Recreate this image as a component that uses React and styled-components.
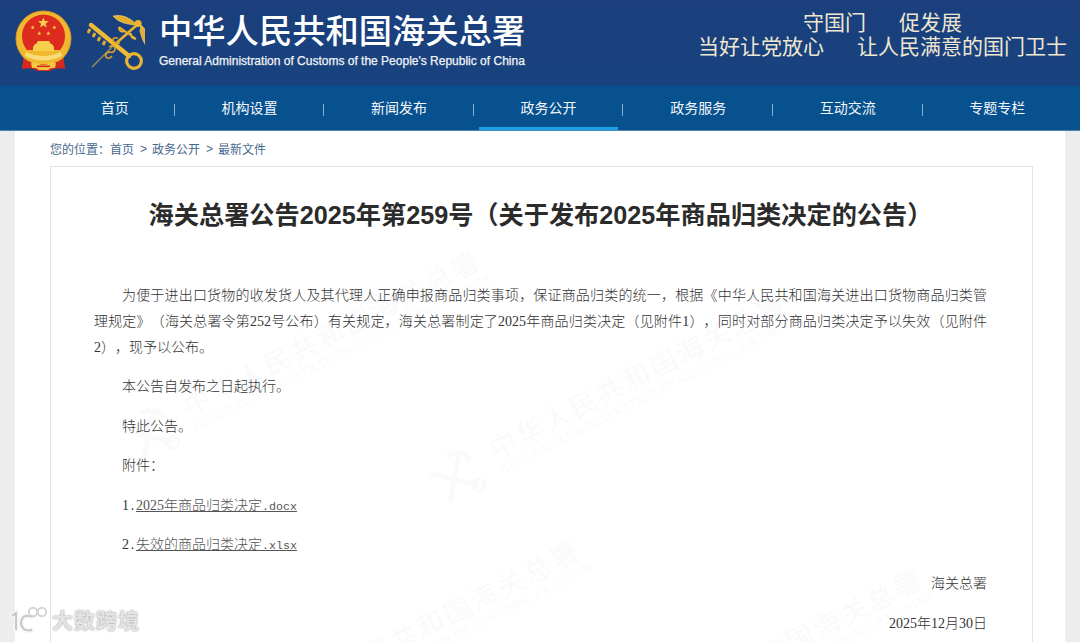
import React from "react";
import styled, { createGlobalStyle } from "styled-components";

const CJK = `"Noto Sans CJK SC", "Liberation Sans", sans-serif`;

const GlobalStyle = createGlobalStyle`
  html, body {
    margin: 0;
    padding: 0;
    height: 642px;
    overflow: hidden;
    background: #ededed;
    font-family: ${CJK};
  }
`;

const Page = styled.div`
  position: relative;
  width: 1080px;
  height: 642px;
  overflow: hidden;
  text-spacing-trim: space-all;
`;

const TopBar = styled.header`
  height: 86px;
  background: linear-gradient(#1a3f7c, #18437f);
  display: flex;
  justify-content: space-between;
`;

const Brand = styled.div`
  display: flex;
  padding: 10px 0 0 15px;
`;

const Emblem = styled.svg`
  width: 58px;
  height: 62px;
  flex: none;
`;

const KeyLogo = styled.svg`
  width: 58px;
  height: 60px;
  margin: 3px 0 0 14px;
  flex: none;
`;

const BrandText = styled.div`
  margin-left: 14px;
  display: flex;
  flex-direction: column;
`;

const BrandName = styled.div`
  font-size: 33.3px;
  line-height: 42px;
  margin-top: -2px;
  font-weight: 500;
  color: #fff;
  white-space: nowrap;
`;

const BrandEnglish = styled.div`
  font-family: "Liberation Sans", sans-serif;
  font-size: 12px;
  line-height: 16px;
  margin-top: 3px;
  color: #f1f4f8;
  -webkit-text-stroke: 0.25px #f1f4f8;
  white-space: nowrap;
`;

const Slogan = styled.div`
  padding: 9px 13px 0 0;
  color: #efe7d2;
  font-size: 21px;
  line-height: 24px;
`;

const SloganRow = styled.div`
  display: flex;
  justify-content: center;
  gap: 33px;
`;

const NavBar = styled.nav`
  height: 45px;
  box-sizing: border-box;
  background: #07518f;
  border-bottom: 1px solid #4b86b3;
  display: flex;
  align-items: stretch;
  padding-left: 30px;
`;

const NavItem = styled.a`
  box-sizing: border-box;
  width: 139.6px;
  height: 44px;
  flex: none;
  display: flex;
  align-items: center;
  justify-content: center;
  color: #f4f7fa;
  font-size: 14px;
  padding-left: ${({ $first }) => ($first ? "30px" : "0")};
  border-bottom: 3px solid ${({ $active }) => ($active ? "#1c9fe3" : "transparent")};
  padding-top: 3px;
  padding-bottom: 3px;
`;

const NavDivider = styled.span`
  width: 1px;
  height: 12px;
  margin: 18px 5px 0 4px;
  background: #8eb0cf;
  flex: none;
`;

const Main = styled.main`
  width: 1050px;
  height: 511px;
  margin: 0 auto;
  background: #fff;
  box-sizing: border-box;
  padding: 0 32px 0 35px;
  overflow: hidden;
`;

const Crumbs = styled.div`
  display: flex;
  align-items: center;
  height: 35px;
  font-size: 12px;
  color: #46698e;
`;

const CrumbSep = styled.span`
  font-family: "Liberation Sans", sans-serif;
  margin: 0 5px 0 6px;
`;

const Card = styled.article`
  border: 1px solid #e4e4e4;
  padding: 31px 45px 60px 43px;
  color: #333;
`;

const Title = styled.h1`
  position: relative;
  z-index: 1;
  margin: 0 0 49px;
  font-size: 25.2px;
  line-height: 34px;
  font-weight: 700;
  color: #2b2b2b;
  text-align: center;
  white-space: nowrap;
  font-family: "Liberation Sans", "Noto Sans CJK SC", sans-serif;
`;

const Para = styled.p`
  position: relative;
  z-index: 1;
  margin: 0 0 13.4px;
  font-size: 14px;
  line-height: 26px;
  font-weight: 300;
  text-align: ${({ $right }) => ($right ? "right" : "justify")};
  text-indent: ${({ $flush }) => ($flush ? "0" : "28px")};
`;

const Digit = styled.span`
  font-family: "Liberation Serif", serif;
  font-size: 14px;
  line-height: 1;
`;

const Mono = styled.span`
  font-family: "Liberation Mono", monospace;
  font-size: 11.67px;
  line-height: 1;
`;

const FileLink = styled.a`
  text-decoration: underline;
  color: #555;
`;

const WatermarkBlock = styled.div`
  position: absolute;
  left: ${({ $x }) => $x}px;
  top: ${({ $y }) => $y}px;
  display: flex;
  align-items: center;
  gap: 14px;
  transform: rotate(-27deg);
  transform-origin: 0 0;
  white-space: nowrap;
  color: #f9fafc;
  pointer-events: none;
`;

const WatermarkKey = styled.svg`
  width: 56px;
  height: 56px;
  flex: none;
`;

const WatermarkName = styled.div`
  font-size: 27px;
  line-height: 30px;
  letter-spacing: 3px;
`;

const WatermarkEnglish = styled.div`
  font-family: "Liberation Serif", serif;
  font-size: 12px;
  line-height: 16px;
  letter-spacing: 0.7px;
`;

const Stamp = styled.div`
  position: absolute;
  z-index: 2;
  left: 10px;
  top: 605px;
  display: flex;
  align-items: center;
  gap: 4px;
`;

const StampText = styled.span`
  font-size: 21px;
  line-height: 28px;
  font-weight: 700;
  letter-spacing: 1px;
  color: #e4e4e4;
  text-shadow: 0 0 2px #8f8f8f;
`;

const Star = ({ x, y, r }) => {
  const pts = [];
  for (let i = 0; i < 10; i++) {
    const a = -Math.PI / 2 + (i * Math.PI) / 5;
    const d = i % 2 ? r * 0.42 : r;
    pts.push(`${(x + d * Math.cos(a)).toFixed(2)},${(y + d * Math.sin(a)).toFixed(2)}`);
  }
  return <polygon points={pts.join(" ")} fill="#f6d04a" />;
};

const NationalEmblem = () => (
  <Emblem viewBox="15 10 58 62">
    <path d="M24 54 L22 69 Q33 67 37 71 L50 71 Q55 67 65 69 L63 54 Z" fill="#d6291f" />
    <circle cx="43.5" cy="38.5" r="27.5" fill="#f0b82e" stroke="#d8962a" strokeWidth="1" />
    <path d="M22 36 A21.5 21.5 0 0 1 65 36 Q65 44 60 50 L27 50 Q22 44 22 36 Z" fill="#dd2c1e" />
    <Star x={43.4} y={23} r={5.6} />
    <Star x={32.7} y={27.5} r={2.2} />
    <Star x={54.3} y={27.5} r={2.2} />
    <Star x={39.3} y={33.5} r={2.2} />
    <Star x={48.3} y={33.5} r={2.2} />
    <path d="M38 41 h11 l2 3 h-15 Z" fill="#f6d04a" />
    <path d="M35 44 h17 l2 3 h-21 Z M33 47 h21 v4 h-21 Z" fill="#f6d04a" />
    <path d="M26 52 Q43 60 61 52 L62 56 Q43 65 25 56 Z" fill="#f8dc78" />
    <path d="M24 59 Q43 70 63 59 L65 68 Q55 66 50 70 L37 70 Q32 66 22 68 Z" fill="#d6291f" />
    <path d="M31 63 q5 -2 8 1 q4 2 9 0 q3 -3 8 -1 l-1 5 q-4 -1 -7 2 h-9 q-3 -3 -7 -2 Z" fill="#f3c845" />
    <path d="M37 65.5 h13 v1.6 h-13 Z" fill="#d6291f" />
  </Emblem>
);

const CustomsKey = () => (
  <KeyLogo viewBox="86 13 58 60">
    <path d="M91 67 L112 46" stroke="#a08a5a" strokeWidth="1.4" fill="none" />
    <path d="M112 46 L137 24" stroke="#e9b030" strokeWidth="2.6" fill="none" />
    <path d="M118 27 Q118 33 124 31 M135 39 Q129 38 130 33 M118 27 L135 39" stroke="#e9b030" strokeWidth="2" fill="none" />
    <path d="M112 16 Q125 13 136 25 Q130 25 123 23 Q116 21 112 16 Z" fill="#e5ae2f" stroke="#f5d469" strokeWidth="0.7" />
    <path d="M140 25 Q149 32 145 46 Q141 40 139 31 Z" fill="#e5ae2f" stroke="#f5d469" strokeWidth="0.7" />
    <circle cx="137" cy="23.5" r="3.6" fill="#edb732" />
    <path d="M90 25 L128 56" stroke="#f0bb35" strokeWidth="4.4" fill="none" strokeLinecap="round" />
    <path d="M89 29 l-2 4 M94 33 l-2 4 M99 37 l-2 4 M104 41 l-2 4" stroke="#e7ad2c" strokeWidth="2.8" fill="none" />
    <circle cx="133" cy="61" r="7.4" fill="none" stroke="#eab432" strokeWidth="3.2" />
    <path d="M117 38 q-6 -1 -5 3 q2 3 7 2 M108 47 q6 -3 6 2 q0 4 -6 3 q-5 2 -3 5 q3 3 6 -1" stroke="#d9a32c" strokeWidth="1.6" fill="none" />
  </KeyLogo>
);

const Watermark = ({ x, y }) => (
  <WatermarkBlock $x={x} $y={y}>
    <WatermarkKey viewBox="0 0 56 56">
      <path d="M6 14 L44 46 M40 10 L10 48 M28 6 Q44 4 48 20" stroke="#f9fafc" strokeWidth="5" fill="none" />
      <circle cx="44" cy="46" r="6" fill="none" stroke="#f9fafc" strokeWidth="3" />
    </WatermarkKey>
    <div>
      <WatermarkName>中华人民共和国海关总署</WatermarkName>
      <WatermarkEnglish>GENERAL ADMINISTRATION OF CUSTOMS, P.R.CHINA</WatermarkEnglish>
    </div>
  </WatermarkBlock>
);

const StampLogo = () => (
  <svg width="38" height="28" viewBox="0 0 38 28">
    <g fill="none" stroke="#f6f6f6" strokeWidth="5" strokeLinecap="round">
      <path d="M2 11 L6 8 V25" />
      <path d="M22 12 Q12 8 11 18 Q12 27 22 25" />
    </g>
    <g fill="none" stroke="#c4c4c4" strokeWidth="1.8">
      <path d="M2 11 L6 8 V25" />
      <path d="M22 12 Q12 8 11 18 Q12 27 22 25" />
    </g>
    <circle cx="23" cy="7" r="4.2" fill="none" stroke="#d4d4d4" strokeWidth="2" />
    <circle cx="32" cy="7" r="4.2" fill="none" stroke="#d4d4d4" strokeWidth="2" />
  </svg>
);

const navItems = ["首页", "机构设置", "新闻发布", "政务公开", "政务服务", "互动交流", "专题专栏"];

const App = () => (
  <Page>
    <GlobalStyle />
    <TopBar>
      <Brand>
        <NationalEmblem />
        <CustomsKey />
        <BrandText>
          <BrandName>中华人民共和国海关总署</BrandName>
          <BrandEnglish>General Administration of Customs of the People's Republic of China</BrandEnglish>
        </BrandText>
      </Brand>
      <Slogan>
        <SloganRow>
          <span>守国门</span>
          <span>促发展</span>
        </SloganRow>
        <SloganRow>
          <span>当好让党放心</span>
          <span>让人民满意的国门卫士</span>
        </SloganRow>
      </Slogan>
    </TopBar>
    <NavBar>
      {navItems.map((name, i) => (
        <React.Fragment key={name}>
          {i > 0 && <NavDivider />}
          <NavItem $first={i === 0} $active={name === "政务公开"}>{name}</NavItem>
        </React.Fragment>
      ))}
    </NavBar>
    <Main>
      <Crumbs>
        您的位置：首页<CrumbSep>&gt;</CrumbSep>政务公开<CrumbSep>&gt;</CrumbSep>最新文件
      </Crumbs>
      <Card>
        <Title>海关总署公告2025年第259号（关于发布2025年商品归类决定的公告）</Title>
        <Para>
          为便于进出口货物的收发货人及其代理人正确申报商品归类事项，保证商品归类的统一，根据《中华人民共和国海关进出口货物商品归类管理规定》（海关总署令第<Digit>252</Digit>号公布）有关规定，海关总署制定了<Digit>2025</Digit>年商品归类决定（见附件<Digit>1</Digit>），同时对部分商品归类决定予以失效（见附件<Digit>2</Digit>），现予以公布。
        </Para>
        <Para>本公告自发布之日起执行。</Para>
        <Para>特此公告。</Para>
        <Para>附件：</Para>
        <Para>
          <Digit>1</Digit><Mono>.</Mono>
          <FileLink><Digit>2025</Digit>年商品归类决定<Mono>.docx</Mono></FileLink>
        </Para>
        <Para>
          <Digit>2</Digit><Mono>.</Mono>
          <FileLink>失效的商品归类决定<Mono>.xlsx</Mono></FileLink>
        </Para>
        <Para $right $flush>海关总署</Para>
        <Para $right $flush><Digit>2025</Digit>年<Digit>12</Digit>月<Digit>30</Digit>日</Para>
      </Card>
    </Main>
    <Watermark x={113} y={421} />
    <Watermark x={419} y={464} />
    <Watermark x={213} y={711} />
    <Watermark x={556} y={739} />
    <Stamp>
      <StampLogo />
      <StampText>大数跨境</StampText>
    </Stamp>
  </Page>
);

export default App;
